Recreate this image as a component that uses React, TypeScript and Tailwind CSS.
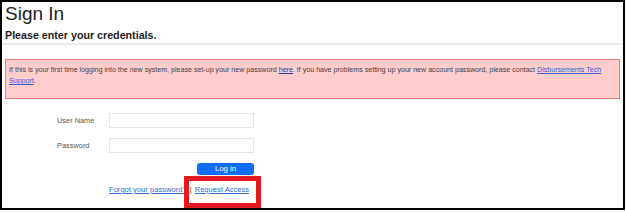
import React from "react";

export default function App() {
  return (
    <div className="relative w-[626px] h-[212px] bg-white overflow-hidden" style={{ fontFamily: '"Liberation Sans", Arial, sans-serif' }}>
      <div className="w-[625px] h-[210px] border-2 border-black flex flex-col">
        <div className="pl-[3px] text-[19px] leading-[24px] text-[#222]">Sign In</div>
        <div className="pl-[3px] mt-[2px] text-[10.7px] leading-[14px] font-bold text-[#222]">Please enter your credentials.</div>
        <div className="mt-[1px] h-[2px] bg-[#ebebeb]"></div>
        <div className="mt-[14px] mx-[3px] h-[40px] border border-[#f07a7a] bg-[#ffcccc] pl-[3px] pr-[6px] pt-[5px] text-[7.1px] leading-[11px] text-[#444]">
          If this is your first time logging into the new system, please set-up your new password{" "}
          <a className="text-[#1a3fb0] underline">here</a>. If you have problems setting up your new account password, please contact{" "}
          <a className="text-[#3a5fd0] underline">Disbursements Tech Support</a>.
        </div>
        <div className="mt-[14px] ml-[55px] grid grid-cols-[52px_145px] gap-y-[10px] text-[7.4px] text-[#555]">
          <div className="flex items-center">User Name</div>
          <div className="h-[15px] border border-[#e4e4e4] bg-white"></div>
          <div className="flex items-center">Password</div>
          <div className="h-[15px] border border-[#e4e4e4] bg-white"></div>
          <div></div>
          <div className="flex justify-end">
            <button className="w-[57px] h-[12px] rounded-[3px] bg-[#0f6efd] text-white text-[7.8px] leading-[12px] flex items-center justify-center">Log in</button>
          </div>
          <div></div>
          <div className="text-[7.6px] leading-[10px] whitespace-nowrap text-[#333]">
            <a className="text-[#2f6fd6] underline">Forgot your password?</a>
            <span className="mx-[3px]">|</span>
            <a className="text-[#2f6fd6] underline">Request Access</a>
          </div>
        </div>
      </div>
      <div className="absolute left-[184px] top-[176px] w-[77px] h-[32px] border-[5px] border-[#e3191e]"></div>
    </div>
  );
}
